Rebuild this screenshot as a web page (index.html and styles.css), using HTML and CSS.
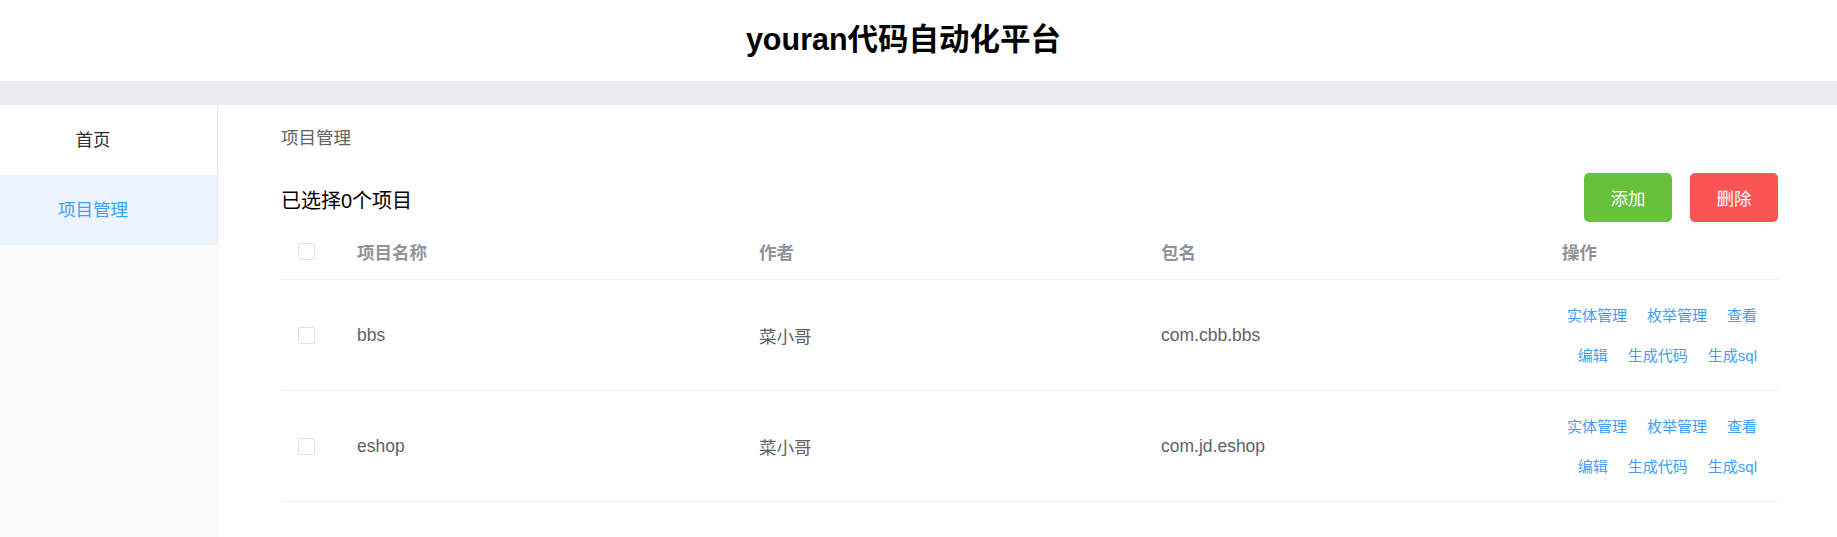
FILE: index.html
```html
<!DOCTYPE html>
<html lang="zh-CN">
<head>
<meta charset="utf-8">
<title>youran代码自动化平台</title>
<link rel="stylesheet" href="styles.css">
</head>
<body>
<header class="top">
  <h1 class="title">youran代码自动化平台</h1>
</header>
<div class="band"></div>
<div class="layout">
  <aside class="aside">
    <nav class="menu">
      <div class="menu-item">首页</div>
      <div class="menu-item active">项目管理</div>
    </nav>
  </aside>
  <main class="main">
    <div class="crumb">项目管理</div>
    <div class="toolbar">
      <span class="selected">已选择0个项目</span>
      <div class="btns">
        <button class="btn btn-add">添加</button>
        <button class="btn btn-del">删除</button>
      </div>
    </div>
    <div class="table">
      <div class="row head">
        <div class="cell cb-cell"><span class="checkbox"></span></div>
        <div class="cell">项目名称</div>
        <div class="cell">作者</div>
        <div class="cell">包名</div>
        <div class="cell">操作</div>
      </div>
      <div class="row body">
        <div class="cell cb-cell"><span class="checkbox"></span></div>
        <div class="cell">bbs</div>
        <div class="cell">菜小哥</div>
        <div class="cell">com.cbb.bbs</div>
        <div class="cell ops">
          <div class="links">
            <a class="link">实体管理</a><a class="link">枚举管理</a><a class="link">查看</a><a class="link">编辑</a><a class="link">生成代码</a><a class="link">生成sql</a>
          </div>
        </div>
      </div>
      <div class="row body">
        <div class="cell cb-cell"><span class="checkbox"></span></div>
        <div class="cell">eshop</div>
        <div class="cell">菜小哥</div>
        <div class="cell">com.jd.eshop</div>
        <div class="cell ops">
          <div class="links">
            <a class="link">实体管理</a><a class="link">枚举管理</a><a class="link">查看</a><a class="link">编辑</a><a class="link">生成代码</a><a class="link">生成sql</a>
          </div>
        </div>
      </div>
    </div>
  </main>
</div>
</body>
</html>
```
FILE: styles.css
```css
* { box-sizing: border-box; }
html, body { margin: 0; padding: 0; }
body {
  font-family: "Liberation Sans", "Noto Sans CJK SC", sans-serif;
  background: #fff;
  color: #303133;
  height: 537px;
  overflow: hidden;
}
.top {
  height: 81px;
  display: flex;
  align-items: center;
  justify-content: center;
  background: #fff;
  padding: 0 30px 3px 0;
}
.title {
  margin: 0;
  font-size: 30.5px;
  font-weight: bold;
  color: #000;
  line-height: 40px;
}
.band {
  height: 24px;
  background: #e9ecf1;
}
.layout {
  display: flex;
  height: 432px;
}
.aside {
  width: 218px;
  flex: none;
  background: #fafafa;
}
.menu {
  background: #fff;
  border-right: 1px solid #e6e6e6;
}
.menu-item {
  height: 70px;
  line-height: 70px;
  font-size: 17.5px;
  color: #303133;
  text-align: center;
  padding-right: 31px;
}
.menu-item.active {
  background: #ecf5ff;
  color: #409eff;
}
.main {
  flex: 1;
  padding: 0 63px 0 63px;
}
.crumb {
  padding-top: 22px;
  line-height: 22px;
  font-size: 17.5px;
  color: #606266;
}
.toolbar {
  margin-top: 24px;
  height: 49px;
  display: flex;
  align-items: center;
  justify-content: space-between;
}
.selected {
  font-size: 20px;
  color: #000;
  padding-top: 3px;
}
.btns {
  display: flex;
  gap: 18px;
}
.btn {
  width: 88px;
  height: 49px;
  border: none;
  border-radius: 5px;
  color: #fff;
  font-family: inherit;
  font-size: 17.5px;
  padding: 0;
}
.btn-add { background: #67c23a; }
.btn-del { background: #fa5555; }
.table {
  margin-top: 1px;
}
.row {
  display: grid;
  grid-template-columns: 76px 402px 402px 401px 1fr;
  align-items: center;
  border-bottom: 1px solid #ebeef5;
}
.row.head {
  height: 57px;
  font-weight: bold;
  color: #909399;
  font-size: 17.5px;
}
.row.body {
  height: 111px;
  color: #606266;
  font-size: 17.5px;
}
.cb-cell {
  padding-left: 17px;
  display: flex;
  align-items: center;
}
.checkbox {
  width: 17px;
  height: 17px;
  border: 1px solid #dcdfe6;
  border-radius: 2px;
  background: #fff;
  display: block;
}
.ops {
  display: flex;
  justify-content: flex-end;
  padding-right: 21px;
}
.links {
  width: 195px;
  display: flex;
  flex-wrap: wrap;
  justify-content: flex-end;
  column-gap: 20px;
  row-gap: 20px;
  padding-top: 2px;
}
.link {
  font-size: 15px;
  line-height: 20px;
  color: #409eff;
  white-space: nowrap;
}
```
